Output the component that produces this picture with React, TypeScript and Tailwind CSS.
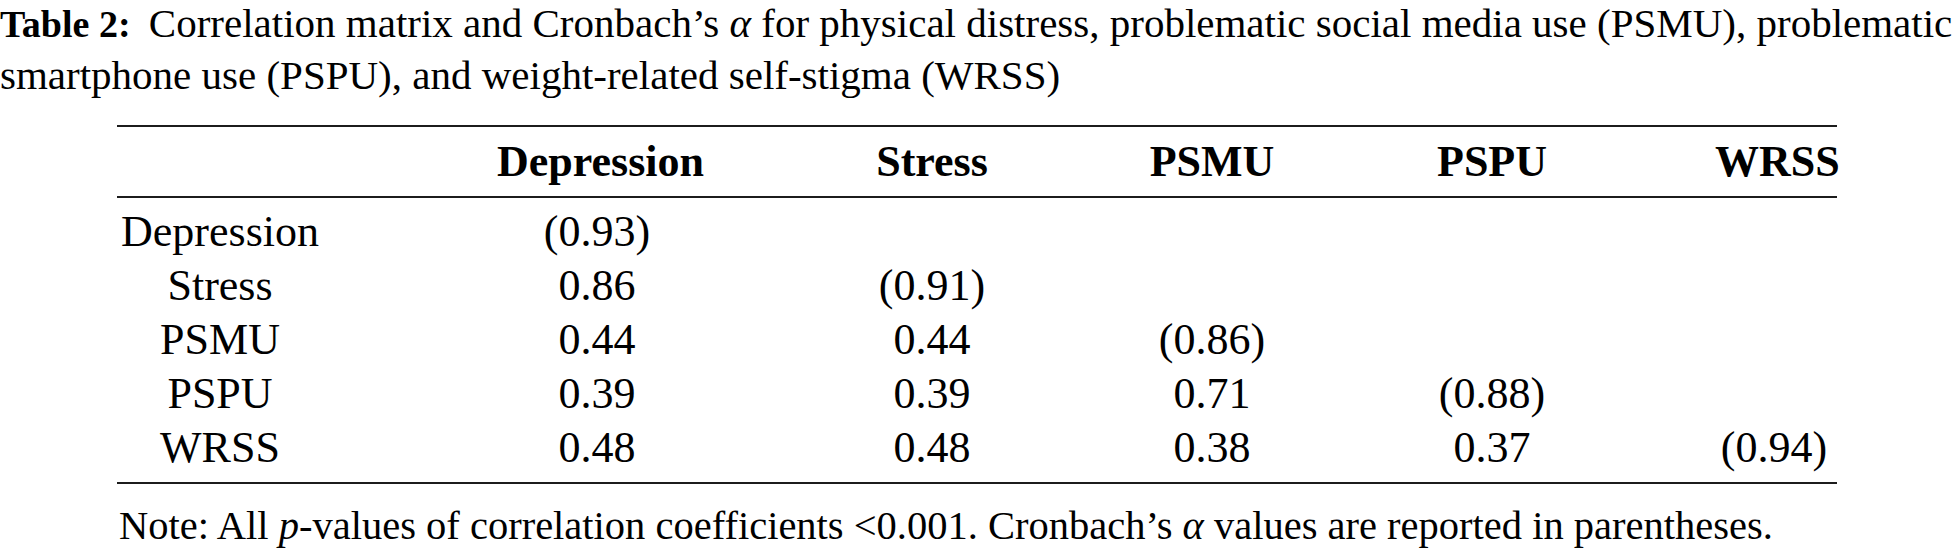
import React from "react";

const colCls = [
  "w-[206px] text-center",
  "ml-[174px] w-[200px] text-center",
  "ml-[135px] w-[200px] text-center",
  "ml-[80px] w-[200px] text-center",
  "ml-[80px] w-[200px] text-center",
  "ml-[123px] w-[118px] text-center whitespace-nowrap",
];

const rows: string[][] = [
  ["Depression", "(0.93)", "", "", "", ""],
  ["Stress", "0.86", "(0.91)", "", "", ""],
  ["PSMU", "0.44", "0.44", "(0.86)", "", ""],
  ["PSPU", "0.39", "0.39", "0.71", "(0.88)", ""],
  ["WRSS", "0.48", "0.48", "0.38", "0.37", "(0.94)"],
];

const header = ["", "Depression", "Stress", "PSMU", "PSPU", "WRSS"];

function Row({ cells, bold }: { cells: string[]; bold?: boolean }) {
  return (
    <div className={`flex h-[54px] leading-[54px] text-[44px] ${bold ? "font-bold" : ""}`}>
      {cells.map((c, i) => (
        <div key={i} className={colCls[i]}>
          {c}
        </div>
      ))}
    </div>
  );
}

export default function App() {
  return (
    <div className="w-[1956px] h-[557px] overflow-hidden bg-white text-black font-['Liberation_Serif',serif]">
      <div className="text-[41px] leading-[46px] whitespace-nowrap">
        <div>
          <span className="font-bold text-[38px] mr-[8px]">Table 2:</span> Correlation matrix and Cronbach’s{" "}
          <i>α</i> for physical distress, problematic social media use (PSMU), problematic
        </div>
        <div className="mt-[5px]">smartphone use (PSPU), and weight-related self-stigma (WRSS)</div>
      </div>
      <div className="ml-[117px] w-[1720px] mt-[27px]">
        <div className="h-[2px] bg-[#1c1c1c]" />
        <div className="mt-[8px]">
          <Row cells={header} bold />
        </div>
        <div className="mt-[7px] h-[2px] bg-[#1c1c1c]" />
        <div className="mt-[7px]">
          {rows.map((r, i) => (
            <Row key={i} cells={r} />
          ))}
        </div>
        <div className="mt-[7px] h-[2px] bg-[#1c1c1c]" />
        <div className="mt-[16px] text-[40.5px] leading-[52px] whitespace-nowrap pl-[2px]">
          Note: All <i>p</i>-values of correlation coefficients &lt;0.001. Cronbach’s <i>α</i> values are
          reported in parentheses.
        </div>
      </div>
    </div>
  );
}
